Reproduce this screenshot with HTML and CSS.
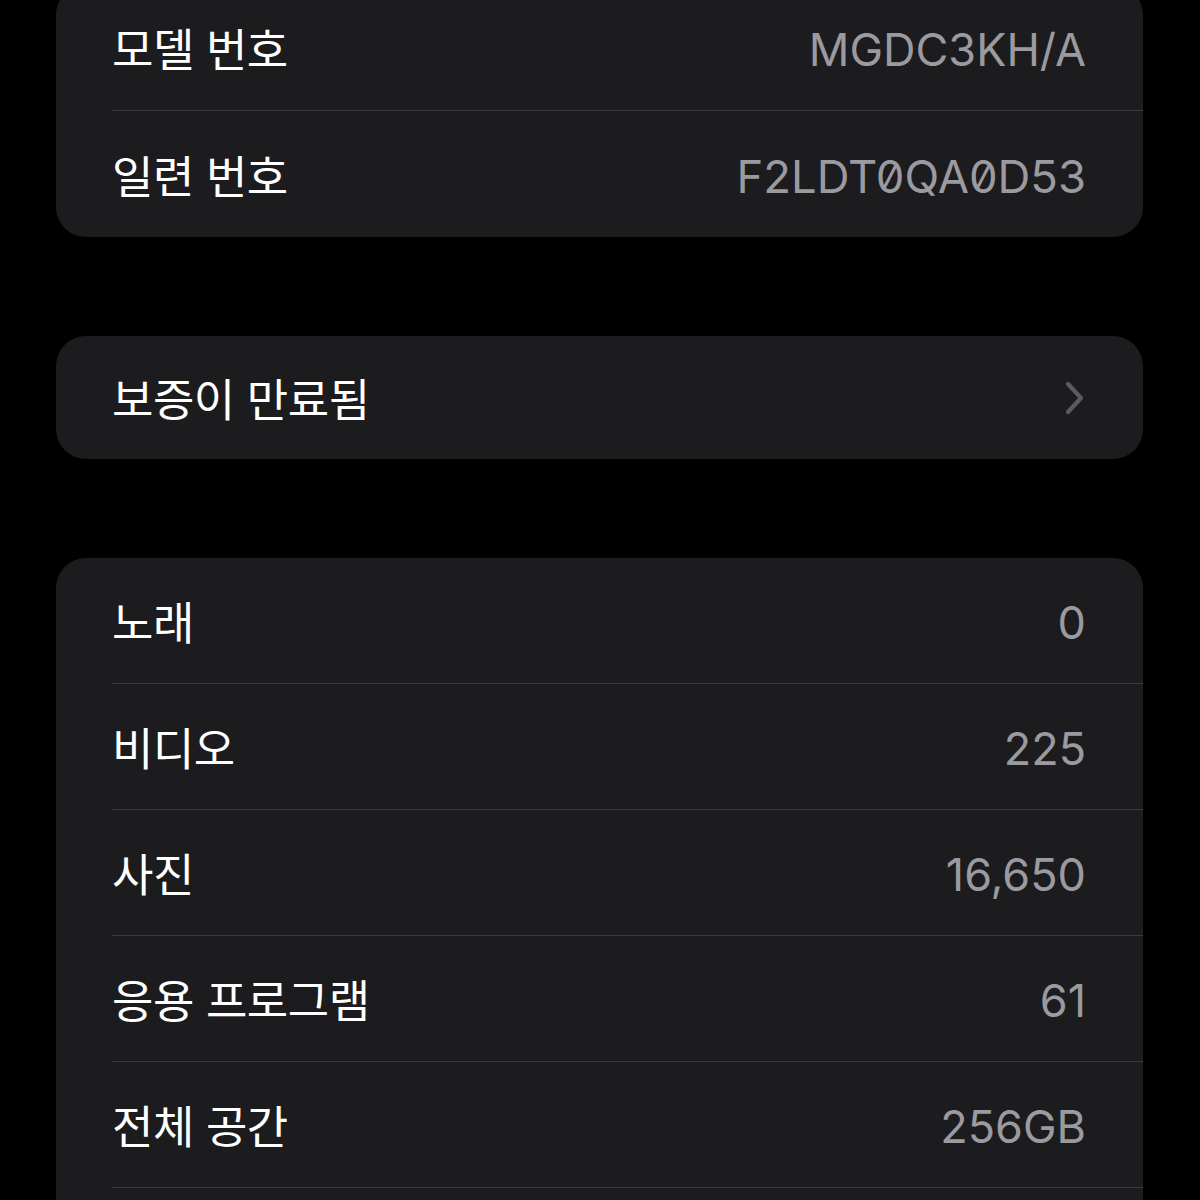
FILE: index.html
```html
<!DOCTYPE html>
<html lang="ko">
<head>
    <meta charset="UTF-8">
    <meta name="viewport" content="width=device-width, initial-scale=1.0">
    <title>정보</title>
    <link rel="stylesheet" href="styles.css">
</head>
<body>

<!-- 기기 정보 -->
<div class="group first">
    <div class="row">
        <span class="label">모델 번호</span>
        <span class="value">MGDC3KH/A</span>
    </div>
    <div class="row">
        <span class="label">일련 번호</span>
        <span class="value serial">F2LDT0QA0D53</span>
    </div>
</div>

<!-- 보증 -->
<div class="group short">
    <div class="row">
        <span class="label">보증이 만료됨</span>
        <svg class="chevron" width="22" height="36" viewBox="0 0 22 36">
            <path d="M4 4 L17 18 L4 32" fill="none" stroke="#5b5b5f" stroke-width="4.2" stroke-linecap="round" stroke-linejoin="round"/>
        </svg>
    </div>
</div>

<!-- 미디어 -->
<div class="group">
    <div class="row">
        <span class="label">노래</span>
        <span class="value">0</span>
    </div>
    <div class="row">
        <span class="label">비디오</span>
        <span class="value">225</span>
    </div>
    <div class="row">
        <span class="label">사진</span>
        <span class="value">16,650</span>
    </div>
    <div class="row">
        <span class="label">응용 프로그램</span>
        <span class="value">61</span>
    </div>
    <div class="row">
        <span class="label">전체 공간</span>
        <span class="value">256GB</span>
    </div>
    <!-- 화면 아래로 이어지는 행 -->
    <div class="row"></div>
</div>

</body>
</html>
```

FILE: styles.css
```css
body {
    font-family: Inter, "Noto Sans CJK KR", sans-serif;
    background-color: #000;
    color: #fff;
    margin: 0;
    padding: 0;
    overflow: hidden;
}

.group {
    background-color: #1c1c1e;
    border-radius: 30px;
    width: 1087px;
    margin: 0 0 99px 56px;
    padding-left: 56px;
    box-sizing: border-box;
}

.group.first {
    margin-top: -15px;
}

.row {
    display: flex;
    align-items: center;
    justify-content: space-between;
    height: 126px;
    box-sizing: border-box;
    padding-right: 57px;
    border-bottom: 1px solid #3a3a3d;
}

.row:last-child {
    border-bottom: none;
}

.group.short .row {
    height: 123px;
}

.label {
    font-size: 45px;
    letter-spacing: -0.5px;
}

.value {
    font-size: 45px;
    color: #9a9aa0;
    padding-top: 4px;
}

.serial {
    font-size: 45.4px;
    font-feature-settings: "zero" 1;
}

.chevron {
    display: block;
}
```
